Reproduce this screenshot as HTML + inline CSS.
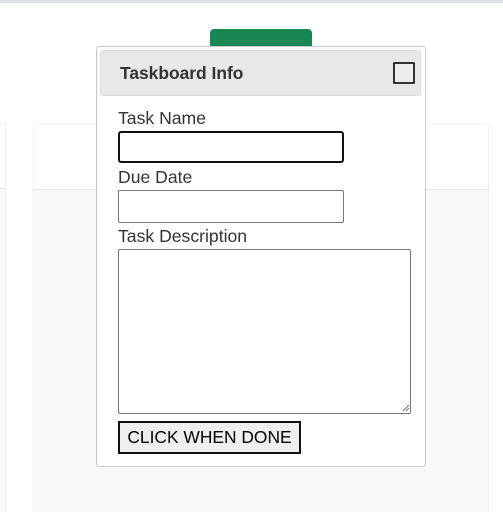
<!DOCTYPE html>
<html><head><style>
html,body{margin:0;padding:0;width:503px;height:512px;overflow:hidden;background:#fff;font-family:"Liberation Sans",Arial,sans-serif;position:relative}
.abs{position:absolute;box-sizing:border-box}
.lbl{font-size:17.6px;color:#333}
</style></head><body>
<div class="abs" style="left:0;top:0;width:503px;height:3px;background:#dee2e6"></div>
<div class="abs" style="left:210px;top:29px;width:102px;height:30px;background:#198754;border-radius:4px"></div>
<div class="abs" style="left:-10px;top:123px;width:16px;height:400px;border:1px solid #eee;border-radius:4px;background:#f8f9fa"></div>
<div class="abs" style="left:-10px;top:123px;width:16px;height:66px;background:#fff;border:1px solid #f0f0f0;border-bottom:1px solid #e6e6e6"></div>
<div class="abs" style="left:33px;top:123px;width:456px;height:400px;border:1px solid #f2f2f2;border-radius:4px;background:#f8f9fa"></div>
<div class="abs" style="left:33px;top:123px;width:456px;height:67px;background:#fff;border:1px solid #f2f2f2;border-bottom:1px solid #e6e6e6;border-radius:4px 4px 0 0"></div>
<div class="abs" style="left:96px;top:46px;width:330px;height:421px;background:#fff;border:1px solid #c8c8c8;border-radius:3px"></div>
<div class="abs" style="left:100px;top:50px;width:321px;height:46px;background:#e8e8e8;border:1px solid #ddd;border-radius:3px"></div>
<div class="abs" style="left:120px;top:63px;font-size:17.4px;font-weight:bold;color:#333">Taskboard Info</div>
<div class="abs" style="left:393px;top:62px;width:22px;height:22px;border:2px solid #333;background:#eee;border-radius:1px"></div>
<div class="abs lbl" style="left:118px;top:108px">Task Name</div>
<div class="abs" style="left:118px;top:131px;width:226px;height:32px;border:2px solid #111;border-radius:3px;background:#fff"></div>
<div class="abs lbl" style="left:118px;top:167px">Due Date</div>
<div class="abs" style="left:118px;top:190px;width:226px;height:33px;border:1px solid #767676;border-radius:2px;background:#fff"></div>
<div class="abs lbl" style="left:118px;top:226px">Task Description</div>
<div class="abs" style="left:118px;top:249px;width:293px;height:165px;border:1px solid #767676;border-radius:2px;background:#fff"></div>
<svg class="abs" style="left:402px;top:404px" width="8" height="8"><path d="M1 7L7 1M4 7L7 4" stroke="#777" stroke-width="1"/></svg>
<div class="abs" style="left:118px;top:421px;width:183px;height:33px;border:2px solid #111;background:#efefef;font-size:17.4px;color:#000;text-align:center;line-height:29px;white-space:nowrap">CLICK WHEN DONE</div>
</body></html>
